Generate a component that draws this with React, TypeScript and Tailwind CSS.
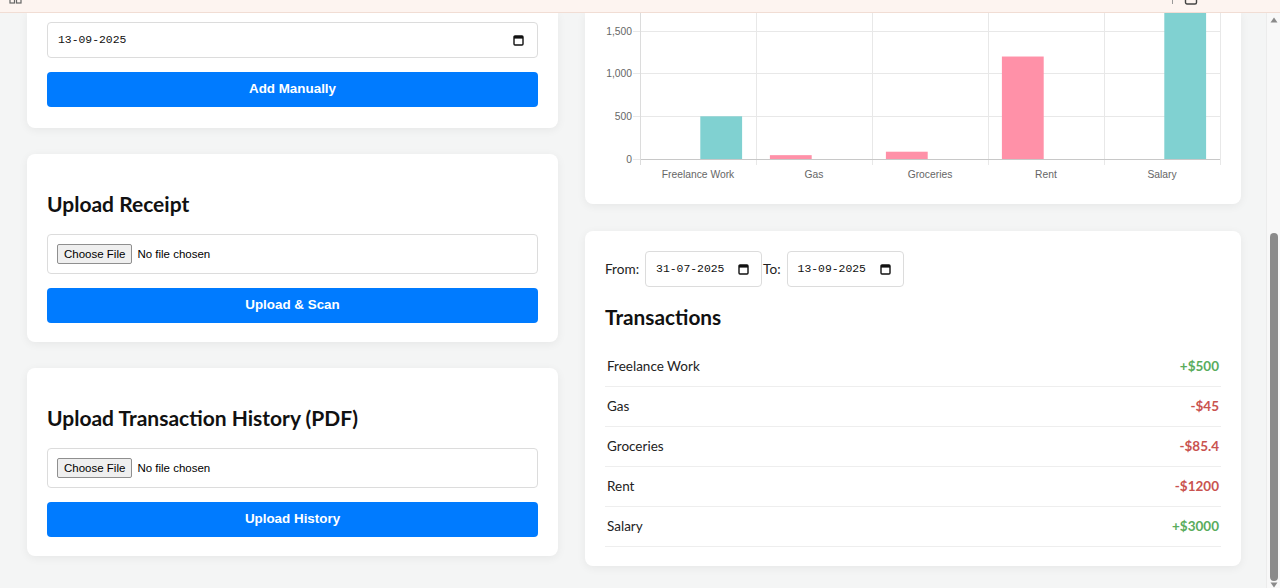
import React from "react";

const body = "font-['Lato','Noto_Sans',sans-serif]";

function CalendarIcon() {
  return (
    <svg width="11" height="12" viewBox="0 0 11 12" className="shrink-0">
      <rect x="1" y="2" width="9" height="9" rx="1" fill="none" stroke="#111" strokeWidth="1.4" />
      <rect x="1" y="2" width="9" height="2.6" fill="#111" />
    </svg>
  );
}

function DateBox({ value, className }: { value: string; className: string }) {
  return (
    <div
      className={`flex items-center justify-between border border-[#dcdcdc] rounded-[4px] bg-white h-[36px] pl-[10px] ${className}`}
    >
      <span className="pt-[2px] font-['Liberation_Mono',monospace] text-[11.4px] text-[#111]">{value}</span>
      <CalendarIcon />
    </div>
  );
}

function BlueButton({ label }: { label: string }) {
  return (
    <button className="w-full h-[35px] rounded-[4px] bg-[#007bff] text-white font-['Liberation_Sans',Arial,sans-serif] font-bold text-[13.4px]">
      {label}
    </button>
  );
}

function FileInput() {
  return (
    <input
      type="file"
      className="block w-full border border-[#dcdcdc] rounded-[4px] bg-white py-[9px] px-[9px] font-['Liberation_Sans',Arial,sans-serif] text-[11.5px] leading-[14px] text-black file:mr-[5px] file:px-[6px] file:py-[2px] file:border file:border-[#8f8f8f] file:rounded-[2px] file:bg-[#efefef] file:text-black"
    />
  );
}

function UploadCard({ title, button }: { title: string; button: string }) {
  return (
    <div className="bg-white rounded-[8px] shadow-[0_2px_10px_rgba(0,0,0,0.06)] px-5 pt-5 pb-[19px]">
      <h2 className={`${body} mt-[18px] mb-[18px] text-[21px] leading-[24px] font-bold text-[#111]`}>{title}</h2>
      <FileInput />
      <div className="mt-[14px]">
        <BlueButton label={button} />
      </div>
    </div>
  );
}

function Chart() {
  const cats = [55, 171, 287, 403, 519];
  const labels = ["Freelance Work", "Gas", "Groceries", "Rent", "Salary"];
  const teal = "#80d1d1";
  const pink = "#ff91a8";
  const k = 0.0854;
  const bars = [
    { x: 115.3, v: 500, c: teal },
    { x: 184.9, v: 45, c: pink },
    { x: 300.9, v: 85.4, c: pink },
    { x: 416.9, v: 1200, c: pink },
    { x: 579.3, v: 3000, c: teal },
  ];
  const ys = [
    { y: 18, t: "1,500" },
    { y: 60, t: "1,000" },
    { y: 103, t: "500" },
    { y: 146, t: "0" },
  ];
  return (
    <svg width="656" height="191" viewBox="0 0 656 191" className="block">
      {ys.map((g) => (
        <line key={g.t} x1="48" x2="635" y1={g.y + 0.5} y2={g.y + 0.5} stroke="#e8e8e8" strokeWidth="1" />
      ))}
      {[...cats, 635].map((x) => (
        <line key={x} x1={x + 0.5} x2={x + 0.5} y1="0" y2="152" stroke="#e8e8e8" strokeWidth="1" />
      ))}
      <line x1="55" x2="635" y1="146.5" y2="146.5" stroke="#c8c8c8" strokeWidth="1" />
      <line x1="55.5" x2="55.5" y1="0" y2="152" stroke="#dcdcdc" strokeWidth="1" />
      {bars.map((b, i) => {
        const h = b.v * k;
        return <rect key={i} x={b.x} y={146 - h} width="41.8" height={h} fill={b.c} />;
      })}
      {ys.map((g) => (
        <text
          key={g.t}
          x="47"
          y={g.y + 4}
          textAnchor="end"
          fontSize="10.3"
          fill="#666"
          fontFamily="'Liberation Sans', Arial, sans-serif"
        >
          {g.t}
        </text>
      ))}
      {labels.map((l, i) => (
        <text
          key={l}
          x={cats[i] + 58}
          y="165"
          textAnchor="middle"
          fontSize="10.3"
          fill="#666"
          fontFamily="'Liberation Sans', Arial, sans-serif"
        >
          {l}
        </text>
      ))}
    </svg>
  );
}

const rows = [
  { name: "Freelance Work", amt: "+$500", pos: true },
  { name: "Gas", amt: "-$45", pos: false },
  { name: "Groceries", amt: "-$85.4", pos: false },
  { name: "Rent", amt: "-$1200", pos: false },
  { name: "Salary", amt: "+$3000", pos: true },
];

export default function App() {
  return (
    <div className={`w-[1280px] h-[588px] overflow-hidden bg-[#f4f5f5] flex flex-col ${body}`}>
      {/* top strip */}
      <div className="h-[13px] shrink-0 bg-[#fdf4f0] border-b border-[#f1ddd4] relative">
        <svg width="14" height="6" viewBox="0 0 14 6" className="absolute left-[9px] top-0">
          <rect x="1" y="-3" width="4.5" height="6" fill="none" stroke="#666" strokeWidth="1.2" />
          <rect x="7.5" y="-3" width="4.5" height="6" fill="none" stroke="#666" strokeWidth="1.2" />
        </svg>
        <div className="absolute left-[1172px] top-0 w-[1px] h-[4px] bg-[#999]" />
        <svg width="14" height="6" viewBox="0 0 14 6" className="absolute left-[1184px] top-0">
          <rect x="1.5" y="-4" width="11" height="8" rx="1.5" fill="none" stroke="#444" strokeWidth="1.4" />
        </svg>
      </div>

      <div className="flex flex-1 min-h-0">
        <div className="flex-1 overflow-hidden grid grid-cols-[531px_656px] gap-x-[27px] pl-[27px] items-start">
          {/* left column */}
          <div className="flex flex-col gap-[26px]">
            <div className="bg-white rounded-b-[8px] shadow-[0_2px_10px_rgba(0,0,0,0.06)] px-5 pt-[9px] pb-[21px]">
              <DateBox value="13-09-2025" className="w-full pr-[13px]" />
              <div className="mt-[14px]">
                <BlueButton label="Add Manually" />
              </div>
            </div>
            <UploadCard title="Upload Receipt" button="Upload & Scan" />
            <UploadCard title="Upload Transaction History (PDF)" button="Upload History" />
          </div>

          {/* right column */}
          <div className="flex flex-col gap-[27px]">
            <div className="bg-white rounded-b-[8px] shadow-[0_2px_10px_rgba(0,0,0,0.06)] h-[191px] overflow-hidden">
              <Chart />
            </div>
            <div className="bg-white rounded-[8px] shadow-[0_2px_10px_rgba(0,0,0,0.06)] px-5 pt-5 pb-[19px]">
              <div className="flex items-center text-[13.6px] text-[#222]">
                <span className="mr-[6px]">From:</span>
                <DateBox value="31-07-2025" className="w-[117px] pr-[12px]" />
                <span className="ml-[1px] mr-[6px]">To:</span>
                <DateBox value="13-09-2025" className="w-[117px] pr-[12px]" />
              </div>
              <h2 className="mt-[18px] text-[20.8px] leading-[24px] font-bold text-[#111]">Transactions</h2>
              <div className="mt-[18px]">
                {rows.map((r) => (
                  <div
                    key={r.name}
                    className="h-[40px] flex items-center justify-between border-b border-[#eeeeee] px-[2px] text-[13.5px]"
                  >
                    <span className="text-[#222]">{r.name}</span>
                    <span className={`font-bold ${r.pos ? "text-[#5aac5d]" : "text-[#c9534f]"}`}>{r.amt}</span>
                  </div>
                ))}
              </div>
            </div>
          </div>
        </div>

        {/* scrollbar */}
        <div className="w-[14px] shrink-0 bg-[#f8f8f8] border-l border-[#ececec] flex flex-col items-center">
          <svg width="8" height="6" viewBox="0 0 8 6" className="mt-[4px]">
            <path d="M4 0.5 L7.5 5.5 L0.5 5.5 Z" fill="#8a8a8a" />
          </svg>
          <div className="mt-[210px] w-[8px] h-[348px] rounded-full bg-[#8b8b8b]" />
          <svg width="8" height="6" viewBox="0 0 8 6" className="mt-[1px]">
            <path d="M0.5 0.5 L7.5 0.5 L4 5.5 Z" fill="#8a8a8a" />
          </svg>
        </div>
      </div>
    </div>
  );
}
